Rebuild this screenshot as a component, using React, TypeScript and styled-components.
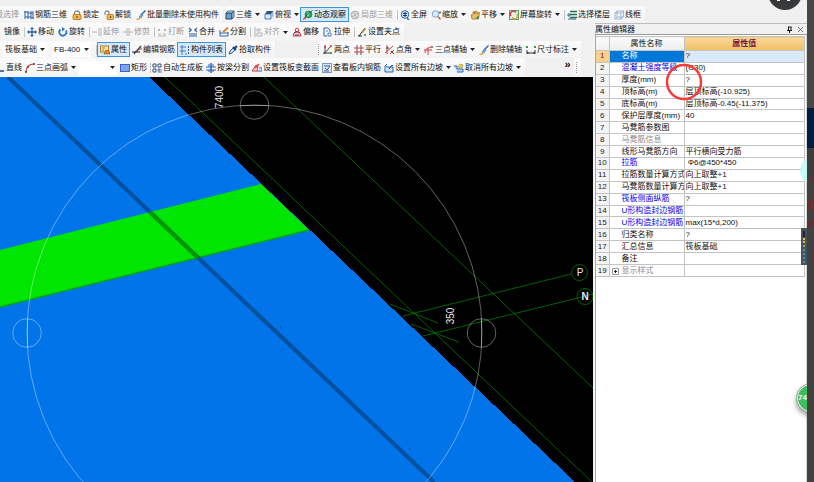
import React from "react";
import styled, { createGlobalStyle, css } from "styled-components";

const GlobalStyle = createGlobalStyle`
  * { box-sizing: border-box; }
  body {
    margin: 0;
    background: #f0f0f0;
    font-family: "Liberation Sans", "Noto Sans CJK SC", sans-serif;
    font-size: 8px;
    color: #111;
    overflow: hidden;
  }
  button, select { font: inherit; color: inherit; }
`;

/* ---------- icons ---------- */

const blue = "#2f62a8";
const red = "#d83a3a";
const gold = "#e0a030";
const dim = "#b4b4b4";

const cube = (
  <>
    <path d="M1 3h6v6H1z" fill="#6f9fcd" stroke="#1f4468" />
    <path d="M1 3l2-2h6L7 3zM7 3l2-2v6L7 9z" fill="#c7dff5" stroke="#1f4468" strokeWidth=".8" />
  </>
);
const brush = (
  <>
    <path d="M9.5.5L5 5" stroke="#3c78b8" strokeWidth="1.6" />
    <path d="M5.500 4L3 7l2 1 2-3z" fill="#7fb2e6" stroke={blue} strokeWidth=".6" />
    <path d="M.5 9.500c1.500 0 3-.5 3.500-2" stroke={gold} strokeWidth="1.400" />
  </>
);
const slope = (
  <>
    <path d="M1 9V3l2-2M1 9h8V4H3L1 2" stroke="#2a65b8" fill="#cfe3fa" />
    <path d="M5 6l3-4 1 1" stroke="#1c4e96" />
  </>
);

const icons: Record<string, React.ReactNode> = {
  rebar3d: <path d="M1 1v8M4 1v8M7 1v8M9 1v8M0 2h4M4 3h5M1 7h6M7 8h3" stroke={blue} />,
  lock: (
    <>
      <path d="M2.500 5V3a2.500 2 0 015 0v2" stroke="#8c8c8c" strokeWidth="1.300" />
      <rect x="1" y="4.500" width="8" height="5" rx="1" fill="#f2b64c" stroke="#a86f18" strokeWidth=".8" />
      <path d="M5 6v2" stroke="#6b430c" />
    </>
  ),
  unlock: (
    <>
      <path d="M1 5V3a2 2 0 014 0v1" stroke="#8c8c8c" strokeWidth="1.300" />
      <rect x="3" y="4.500" width="6.500" height="5" rx="1" fill="#f2b64c" stroke="#a86f18" strokeWidth=".8" />
      <path d="M6.500 6v2" stroke="#6b430c" />
    </>
  ),
  brush,
  cube,
  topview: (
    <>
      <path d="M1 4h6v5H1z" fill="#d9e8f7" stroke={blue} strokeWidth=".8" />
      <path d="M1 4l2-3h6.500L7 4z" fill="#2d567f" />
      <path d="M7 4l2.500-3v5L7 9z" fill="#8fb8df" />
    </>
  ),
  orbit: (
    <>
      <circle cx="5.500" cy="4.500" r="3.800" fill="#1f9a4a" />
      <path d="M4 2l3 1-1 3-2 1z" fill="#7fe08a" />
      <path d="M.5 9.500C2 6 6 3 9.500.5" stroke="#244f8e" />
      <circle cx="2" cy="8" r="1.200" fill="#e34d3c" />
    </>
  ),
  local3d: (
    <>
      <circle cx="5" cy="5" r="4" fill="#dedede" stroke={dim} />
      <path d="M2 7l6-4M3 2l4 6" stroke={dim} />
    </>
  ),
  full: (
    <>
      <circle cx="5" cy="4.500" r="3.800" fill="#d7e6f8" stroke={blue} />
      <path d="M3 3.500h4M3 5.500h4M5 2v5" stroke="#1a3f78" />
      <path d="M7 8l2 2" stroke={blue} strokeWidth="1.500" />
    </>
  ),
  zoom: (
    <>
      <circle cx="4.500" cy="4" r="3.300" fill="#d7ebff" stroke="#7fa3cb" />
      <path d="M7 6.500l2.500 3" stroke="#b9773b" strokeWidth="1.600" />
      <path d="M9 1v3M7.500 2.500h3" stroke="#555" strokeWidth=".7" />
    </>
  ),
  pan: (
    <>
      <path d="M2 9L1 5l2-.5V2l1.500-.5V4l1-3L7 1.500V4l1.500-2 1 .5L8.500 9z" fill="#e9bb62" stroke="#94671c" strokeWidth=".7" />
      <path d="M6 7l3-1v2.500L7 9z" fill="#4a8a54" />
    </>
  ),
  spin: (
    <>
      <rect x=".5" y=".5" width="9" height="9" fill="#dff2e4" stroke="#48a26a" />
      <path d="M2 6a3 3 0 015-3.500" stroke={red} strokeWidth="1.500" />
      <path d="M8 4a3 3 0 01-5 3.500" stroke="#e69a2a" strokeWidth="1.500" />
    </>
  ),
  floor: (
    <>
      <path d="M3 1.500h7M3 4.500h7M3 7.500h7" stroke="#1f6f4c" strokeWidth="1.500" />
      <path d="M0 5h4M2 3v4M1 9h8" stroke={blue} />
    </>
  ),
  wire: (
    <path d="M1 3h6v6H1zM1 3l2-2h6.500L7 3M9.500 1v6L7 9M3 1v6h6M3 7L1 9" stroke="#87a8cf" strokeWidth=".8" />
  ),
  move: (
    <>
      <path d="M5 1v8M1 5h8" stroke="#2b5f9e" strokeWidth="1.300" />
      <path d="M5 0l2 2H3zM5 10l2-2H3zM0 5l2-2v4zM10 5L8 3v4z" fill="#2b5f9e" />
    </>
  ),
  rotate: (
    <>
      <path d="M8 3.500A3.500 3.500 0 112.500 2.500" stroke="#2e74c8" strokeWidth="1.800" />
      <path d="M4 0v4.500L7 2z" fill="#2e74c8" />
    </>
  ),
  extend: <path d="M0 5h5M7 1v8M9 1v8" stroke={dim} />,
  trim: <path d="M0 5h4M6 5h4M4 1v8M6 1v8" stroke={dim} />,
  brk: <path d="M1 2l2 2M3 2L1 4M7 2l2 2M9 2L7 4M1 7h3M6 7h3M1 9h8" stroke={dim} />,
  merge: <path d="M1 1l2 2-2 2M9 1L7 3l2 2M3 3h1M6 3h1M1 7h8M1 9h8" stroke={blue} strokeWidth="1.200" />,
  split: (
    <>
      <path d="M1 3v6h8V5M1 6h8" stroke={blue} />
      <path d="M4 5l5-4.500" stroke="#e07a2a" strokeWidth="1.800" />
    </>
  ),
  align: <path d="M2 0v10M4 2h3v2H4zM4 6h5v3H4z" stroke={dim} />,
  offset: (
    <>
      <path d="M1 9a4 4 0 018 0z" fill="#f7d4d4" stroke={red} />
      <path d="M2 6a3.500 3.500 0 016 0M3 8h4" stroke="#23498a" />
      <circle cx="5" cy="3" r="1.800" stroke={red} />
    </>
  ),
  stretch: (
    <>
      <path d="M1 1h4l2 2v2M1 1v8h3" stroke={blue} />
      <path d="M5 6h3v3H5zM3 4h2" stroke="#4b86cf" />
    </>
  ),
  grip: (
    <>
      <path d="M2 9l6-8M1 9h4" stroke="#222" />
      <path d="M5 5l3-4 1 1-3 4z" fill="#c8963a" />
      <path d="M7 8h2" stroke="#318a38" strokeWidth="1.500" />
    </>
  ),
  props: (
    <>
      <rect x=".5" y="1" width="8" height="6" fill="#fbe6a8" stroke="#a88030" />
      <path d="M2 3h3M2 5h2" stroke="#a88030" />
      <path d="M4 9l2-4 3 1 1 3z" fill="#e88a2a" stroke="#8e4c10" strokeWidth=".6" />
    </>
  ),
  edit: (
    <>
      <path d="M0 7h8M2 9l2-3" stroke="#222" strokeWidth="1.200" />
      <path d="M4 7l5-6" stroke="#45484d" strokeWidth="1.600" />
      <path d="M7 4h3" stroke="#b0442a" />
    </>
  ),
  list: (
    <>
      <path d="M1 1h2v2H1zM1 5h2v2H1z" stroke={blue} strokeWidth=".8" />
      <path d="M4 2h2M4 6h2M1 9h2M5 9h2" stroke="#4d7cae" />
      <path d="M8.500 1v8" stroke={blue} strokeDasharray="2 1" />
    </>
  ),
  pick: (
    <>
      <path d="M1 9l1-3 3-3 2 2-3 3z" fill="#c4ddf6" stroke={blue} />
      <path d="M5 2l3 3M7 3l2-2" stroke="#17467f" strokeWidth="2" />
    </>
  ),
  two: (
    <>
      <path d="M2 0v9M0 8h9M8 1L1 9" stroke="#444" />
      <path d="M1 2h2M7 1h2" stroke={red} strokeWidth="1.500" />
      <path d="M7 8h2" stroke="#249a40" strokeWidth="1.500" />
    </>
  ),
  parallel: (
    <>
      <path d="M3 0v10M7 0v10" stroke="#555" />
      <path d="M0 3h10M0 7h10" stroke={red} />
    </>
  ),
  angle: (
    <>
      <path d="M2 0v9M0 8l8-7M5 9l4-4" stroke={red} />
      <path d="M1 3h3M6 6l3 3" stroke="#333" />
    </>
  ),
  axis3: (
    <>
      <path d="M1 8c0-4 3-6 8-6M4 10V3M0 5h8" stroke={red} />
      <path d="M7 2h2" stroke="#777" strokeWidth="1.500" />
    </>
  ),
  dim: (
    <>
      <path d="M1 5v4M9 5v4M1 8h8M2 7v2M8 7v2" stroke="#333" />
      <path d="M0 2h2M8 2h2" stroke="#2e9d45" strokeWidth="2" />
    </>
  ),
  line: <path d="M0 2l4 6M5 8h4" stroke="#24467c" strokeWidth="1.500" />,
  arc: (
    <>
      <path d="M1 9c0-5 3-8 8-8" stroke={red} strokeWidth="1.200" />
      <path d="M0 9h2M2 4h2M8 1h2" stroke="#444" strokeWidth="1.500" />
    </>
  ),
  rect: <rect x=".5" y="1.500" width="9" height="7" fill="#7ba4ec" stroke="#3a64bd" />,
  auto: (
    <>
      <path d="M1 1h3v3H1zM6 1h3v3H6zM1 6h3v3H1z" stroke="#33507c" />
      <path d="M5 7h5M6 9h4M7 5v4" stroke="#6a6fa8" />
    </>
  ),
  beam: (
    <>
      <path d="M0 4h10M0 7h10M3 1v3M7 1v3M3 7v2M7 7v2" stroke="#2b66b8" />
      <path d="M5 0v10" stroke="#2b66b8" strokeWidth="1.500" />
    </>
  ),
  section: (
    <>
      <path d="M0 8l4-6 2 1-1 5z" fill="#f7cfcf" stroke={red} />
      <path d="M5 8h5V5H7" stroke={blue} />
      <path d="M3 5l4-4" stroke={red} strokeWidth="1.500" />
    </>
  ),
  view: (
    <>
      <rect x=".5" y=".5" width="9" height="9" fill="#dbe6f5" stroke="#7d98c0" />
      <path d="M2 3h6M3 5l2 2 3-4M2 8h5" stroke="#3c5f94" />
    </>
  ),
  slope,
  unslope: (
    <>
      <path d="M0 3h3v3h6v3H3" stroke="#2a65b8" fill="#b9d6f8" />
      <path d="M4 4l2-3 3 1-1 3z" fill="#efcd62" stroke="#a58224" strokeWidth=".6" />
    </>
  ),
};

const IconSvg = styled.svg`
  width: 10px;
  height: 10px;
  flex: none;
  fill: none;
`;
const Icon = ({ name }: { name: string }) => (
  <IconSvg viewBox="0 0 10 10" aria-hidden="true">{icons[name]}</IconSvg>
);

const ArrowSvg = styled.svg`
  width: 5px;
  height: 3px;
  flex: none;
  margin-left: 2px;
  pointer-events: none;
`;
const Arrow = () => (
  <ArrowSvg viewBox="0 0 5 3" aria-hidden="true"><path d="M0 0h5L2.500 3z" fill="#222" /></ArrowSvg>
);

/* ---------- toolbars ---------- */

const Page = styled.div`
  position: relative;
  display: flex;
  height: 100vh;
  overflow: hidden;
`;
const Workspace = styled.main`
  position: relative;
  flex: 1;
  min-width: 0;
  display: flex;
  flex-direction: column;
  overflow: hidden;
`;
const Body = styled.div`
  flex: 1;
  min-height: 0;
  display: flex;
`;
const Left = styled.div`
  flex: 1;
  min-width: 0;
  display: flex;
  flex-direction: column;
`;
const Bar = styled.div<{ $h: number; $top?: number; $end?: number }>`
  flex: none;
  display: flex;
  gap: 2px;
  height: ${(p) => p.$h}px;
  padding-top: ${(p) => p.$top ?? 0}px;
  padding-right: ${(p) => p.$end ?? 0}px;
  overflow: hidden;
`;
const Group = styled.div<{ $gap?: number; $pad?: number }>`
  flex: none;
  display: flex;
  align-items: center;
  gap: ${(p) => p.$gap ?? 5}px;
  padding: 0 4px 0 ${(p) => p.$pad ?? 0}px;
  background: linear-gradient(#fbfbfb, #f3f3f3);
`;
const Spacer = styled.div`
  flex: 1;
`;
const ToolButton = styled.button<{ $active?: boolean; $clip?: number }>`
  flex: none;
  display: flex;
  align-items: center;
  gap: 1px;
  height: 15px;
  padding: 0;
  border: 0;
  background: none;
  white-space: nowrap;
  line-height: 12px;
  &:disabled { color: #999; }
  ${(p) => p.$active && css`
    padding: 0 2px;
    margin: 0 -3px;
    border: 1px solid #3c96dc;
    background: #d5e8f8;
  `}
  ${(p) => p.$clip && css`
    width: ${p.$clip}px;
    justify-content: flex-end;
    overflow: hidden;
  `}
`;
const Separator = styled.span`
  flex: none;
  width: 1px;
  height: 10px;
  margin-right: -2px;
  background: #c4c4c4;
`;
const Grip = styled.span`
  flex: none;
  width: 1px;
  height: 11px;
  border-left: 1px dotted #999;
`;
const MoreButton = styled.button`
  align-self: flex-start;
  width: 9px;
  padding: 0;
  border: 0;
  background: none;
  font-size: 11px;
  line-height: 12px;
  font-weight: bold;
`;

type ToolProps = {
  icon?: string;
  label: string;
  menu?: boolean;
  active?: boolean;
  off?: boolean;
  clip?: number;
  sep?: boolean;
};
const Tool = ({ icon, label, menu, active, off, clip, sep }: ToolProps) => (
  <>
    {sep && <Separator />}
    <ToolButton type="button" disabled={off} $active={active} $clip={clip}>
      {icon && <Icon name={icon} />}
      <span>{label}</span>
      {menu && <Arrow />}
    </ToolButton>
  </>
);

const ComboBox = styled.label<{ $w: number }>`
  flex: none;
  display: flex;
  align-items: center;
  width: ${(p) => p.$w}px;
  height: 14px;
  padding-right: 2px;
  background: #fff;
`;
const ComboSelect = styled.select`
  flex: 1;
  min-width: 0;
  height: 14px;
  padding: 0 0 0 2px;
  border: 0;
  background: none;
  appearance: none;
  line-height: 12px;
`;
const Combo = ({ name, value, w }: { name: string; value: string; w: number }) => (
  <ComboBox $w={w}>
    <ComboSelect aria-label={name} defaultValue={value}>
      <option>{value}</option>
    </ComboSelect>
    <Arrow />
  </ComboBox>
);

/* ---------- drawing area ---------- */

const Drawing = styled.svg`
  flex: 1;
  min-height: 0;
  width: 100%;
  display: block;
  background: #000;
  font-size: 10px;
`;

const Scene = () => (
  <Drawing viewBox="0 77 593 405" preserveAspectRatio="xMinYMin slice" role="img" aria-label="三维视图">
    <path d="M0 77H149L575 482H0z" fill="#0074e8" shapeRendering="crispEdges" />
    <path d="M0 250L261 184 309 230 0 307z" fill="#00e600" />
    <path d="M0 307L309 230" stroke="#00a01c" strokeWidth="1.500" />
    <path d="M8 77L434 482" stroke="#00509e" strokeWidth="4" />
    <path d="M150 212L198 258" stroke="#009a00" strokeWidth="4" />
    <g stroke="#007a00" fill="none" strokeWidth=".8">
      <path d="M165 77L592 482M264 77L593 388" />
      <path d="M403 316L571 274M423 336L578 298l15-4" />
      <path d="M390 304L438 323M411 324L459 342" />
      <circle cx="579.500" cy="272.500" r="8" />
      <circle cx="585" cy="296.500" r="8" />
    </g>
    <g stroke="#fff" strokeOpacity=".42" fill="none" strokeWidth=".9">
      <circle cx="254.500" cy="332.500" r="227.500" />
      <circle cx="254.500" cy="105" r="14.300" />
      <circle cx="481.500" cy="333" r="14.300" />
      <circle cx="27" cy="333" r="14.300" />
      <path d="M241 105.500h27M481.500 319v28M27.500 319v28" />
    </g>
    <path d="M280 327h1M409 449h1" stroke="#00305c" />
    <g fill="#e8e8e8" textAnchor="middle">
      <text transform="translate(223 97) rotate(-90)">7400</text>
      <text transform="translate(454 316) rotate(-90)">350</text>
      <text x="580" y="276">P</text>
      <text x="585" y="300" fontWeight="bold">N</text>
    </g>
  </Drawing>
);

/* ---------- property editor ---------- */

const Panel = styled.aside`
  position: relative;
  flex: none;
  width: 214px;
  display: flex;
  flex-direction: column;
  border-left: 2px solid #f4f4f4;
`;
const PanelTitle = styled.header`
  flex: none;
  display: flex;
  align-items: center;
  gap: 4px;
  height: 12px;
  padding: 1px 3px 0 0;
  border-top: 1px solid #bdbdbd;
  border-bottom: 1px solid #999;
`;
const TitleText = styled.h2`
  flex: 1;
  margin: 0;
  font-size: 8px;
  line-height: 10px;
  font-weight: normal;
`;
const TitleButton = styled.button`
  display: flex;
  padding: 0;
  border: 0;
  background: none;
`;
const TitleIcon = styled.svg`
  width: 7px;
  height: 7px;
  fill: none;
`;
const PanelBody = styled.div`
  flex: 1;
  min-height: 0;
  padding: 1px 1px 0 0;
  border-left: 1px solid #a6a6a6;
  border-right: 1px solid #d8d8d8;
  background: #fff;
`;
const Grid = styled.table`
  width: 100%;
  height: 241px;
  table-layout: fixed;
  border-collapse: collapse;
  line-height: 10px;
  border-right: 1px solid #c0c0c0;
`;
const HeadCell = styled.th<{ $w?: number; $hot?: boolean }>`
  width: ${(p) => (p.$w ? p.$w + "px" : "auto")};
  height: 14px;
  padding: 0;
  border: 1px solid #c4c4c4;
  border-left: 0;
  font-weight: normal;
  background: ${(p) => (p.$hot ? "linear-gradient(#f9d99b, #f0bf63)" : "linear-gradient(#fbfbfb, #ededed)")};
  ${(p) => p.$hot && css`color: #7c1444; font-weight: bold;`}
`;
const IndexCell = styled.th<{ $selected: boolean }>`
  padding: 0;
  border-right: 1px solid #c4c4c4;
  border-bottom: 1px solid #c4c4c4;
  font-weight: normal;
  background: ${(p) => (p.$selected ? "#fbd08a" : "#f4f4f4")};
  color: ${(p) => (p.$selected ? "#7c1444" : "#222")};
`;
const nameColors = { plain: "#111", link: "#0000f0", muted: "#8c8c8c" };
const NameCell = styled.td<{ $tone: keyof typeof nameColors; $selected: boolean }>`
  padding: 0 0 0 12px;
  border-right: 1px solid #c4c4c4;
  border-bottom: 1px solid #c4c4c4;
  white-space: nowrap;
  overflow: hidden;
  color: ${(p) => (p.$selected ? "#fff" : nameColors[p.$tone])};
  background: ${(p) => (p.$selected ? "#0078d7" : "#fff")};
`;
const ValueCell = styled.td<{ $selected: boolean }>`
  padding: 0 0 0 1px;
  border-bottom: 1px solid #c4c4c4;
  white-space: pre;
  overflow: hidden;
  background: ${(p) => (p.$selected ? "#d8eaf9" : "#fff")};
`;
const Expander = styled.button`
  float: left;
  display: flex;
  width: 7px;
  height: 7px;
  margin: 2px 0 0 -10px;
  padding: 0;
  border: 0;
  background: #fff;
`;
const Marker = styled.svg`
  position: absolute;
  left: 69px;
  top: 40px;
  width: 40px;
  height: 40px;
  fill: none;
  pointer-events: none;
`;

type Row = { name: string; value?: string; tone?: keyof typeof nameColors; expand?: boolean };
const rows: Row[] = [
  { name: "名称", value: "?" },
  { name: "混凝土强度等级", value: "(C30)", tone: "link" },
  { name: "厚度(mm)", value: "?" },
  { name: "顶标高(m)", value: "层顶标高(-10.925)" },
  { name: "底标高(m)", value: "层顶标高-0.45(-11.375)" },
  { name: "保护层厚度(mm)", value: "40" },
  { name: "马凳筋参数图" },
  { name: "马凳筋信息", tone: "muted" },
  { name: "线形马凳筋方向", value: "平行横向受力筋" },
  { name: "拉筋", value: " Φ6@450*450", tone: "link" },
  { name: "拉筋数量计算方式", value: "向上取整+1" },
  { name: "马凳筋数量计算方", value: "向上取整+1" },
  { name: "筏板侧面纵筋", value: "?", tone: "link" },
  { name: "U形构造封边钢筋", tone: "link" },
  { name: "U形构造封边钢筋", value: "max(15*d,200)", tone: "link" },
  { name: "归类名称", value: "?" },
  { name: "汇总信息", value: "筏板基础" },
  { name: "备注" },
  { name: "显示样式", tone: "muted", expand: true },
];

const PropertyEditor = () => (
  <Panel>
    <PanelTitle>
      <TitleText>属性编辑器</TitleText>
      <TitleButton type="button" aria-label="固定">
        <TitleIcon viewBox="0 0 7 7"><path d="M2.500 1v3M5 1v3M2 1h3.500M1 4.500h5M3.500 4v3" stroke="#111" /></TitleIcon>
      </TitleButton>
      <TitleButton type="button" aria-label="关闭">
        <TitleIcon viewBox="0 0 7 7"><path d="M1 1l5 5M6 1L1 6" stroke="#555" strokeWidth=".8" /></TitleIcon>
      </TitleButton>
    </PanelTitle>
    <PanelBody>
      <Grid>
        <thead>
          <tr>
            <HeadCell $w={13} aria-label="序号" />
            <HeadCell $w={75}>属性名称</HeadCell>
            <HeadCell $hot>属性值</HeadCell>
          </tr>
        </thead>
        <tbody>
          {rows.map((r, i) => (
            <tr key={i}>
              <IndexCell scope="row" $selected={i === 0}>{i + 1}</IndexCell>
              <NameCell $tone={r.tone ?? "plain"} $selected={i === 0}>
                {r.expand && (
                  <Expander type="button" aria-label="展开">
                    <TitleIcon viewBox="0 0 7 7">
                      <path d="M.5.5h6v6h-6z" stroke="#9a9a9a" />
                      <path d="M2 3.500h3M3.500 2v3" stroke="#222" />
                    </TitleIcon>
                  </Expander>
                )}
                {r.name}
              </NameCell>
              <ValueCell $selected={i === 0}>{r.value}</ValueCell>
            </tr>
          ))}
        </tbody>
      </Grid>
    </PanelBody>
    <Marker viewBox="0 0 40 40" aria-hidden="true">
      <circle cx="20" cy="19" r="17" stroke="#f73a3a" strokeWidth="2.500" />
    </Marker>
  </Panel>
);

/* ---------- floating widgets and right edge ---------- */

const CallBubble = styled.svg`
  position: absolute;
  top: 0;
  right: 5px;
  width: 34px;
  height: 10px;
`;
const Halo = styled.span`
  position: absolute;
  top: 158px;
  right: -19px;
  width: 26px;
  height: 26px;
  border-radius: 50%;
  background: #c6fbf7;
`;
const Meter = styled.svg`
  position: absolute;
  top: 228px;
  right: 0;
  width: 6px;
  height: 37px;
`;
const ScoreBall = styled.div`
  position: absolute;
  top: 383px;
  right: -19px;
  width: 30px;
  height: 30px;
  padding-left: 1px;
  border: 1px solid #a8b0a8;
  border-radius: 50%;
  background: #40bd5c;
  box-shadow: inset 0 0 0 1px #f2f2f2, 0 3px 5px rgba(0, 0, 0, 0.4);
  color: #fff;
  font-weight: bold;
  line-height: 28px;
`;
const Edge = styled.div`
  flex: none;
  width: 7px;
  display: flex;
  flex-direction: column;
  overflow: hidden;
  background: #414240;
`;
const EdgeBlock = styled.div<{ $h: number; $bg: string }>`
  flex: none;
  height: ${(p) => p.$h}px;
  background: ${(p) => p.$bg};
`;
const EdgeText = styled.div`
  flex: none;
  font-size: 12px;
  line-height: 16px;
  white-space: nowrap;
  color: #8c2020;
`;
const EdgeMark = styled.svg`
  flex: none;
  width: 7px;
  height: 20px;
  fill: none;
`;

export default function App() {
  return (
    <Page>
      <GlobalStyle />
      <Workspace>
        <Bar $h={23} $top={6}>
          <Group>
            <Tool label="量选择" off clip={19} />
            <Tool icon="rebar3d" label="钢筋三维" />
            <Tool icon="lock" label="锁定" />
            <Tool icon="unlock" label="解锁" />
            <Tool icon="brush" label="批量删除未使用构件" />
          </Group>
          <Group $gap={4}>
            <Tool icon="cube" label="三维" menu />
            <Tool icon="topview" label="俯视" menu />
            <Tool icon="orbit" label="动态观察" active />
            <Tool icon="local3d" label="局部三维" off />
            <Tool icon="full" label="全屏" sep />
            <Tool icon="zoom" label="缩放" menu />
            <Tool icon="pan" label="平移" menu />
            <Tool icon="spin" label="屏幕旋转" menu />
            <Tool icon="floor" label="选择楼层" sep />
            <Tool icon="wire" label="线框" />
          </Group>
        </Bar>
        <Body>
          <Left>
            <Bar $h={18}>
              <Group $pad={4} $gap={4}>
                <Tool label="镜像" />
                <Tool icon="move" label="移动" sep />
                <Tool icon="rotate" label="旋转" />
                <Tool icon="extend" label="延伸" sep off />
                <Tool icon="trim" label="修剪" off />
                <Tool icon="brk" label="打断" sep off />
                <Tool icon="merge" label="合并" />
                <Tool icon="split" label="分割" />
                <Tool icon="align" label="对齐" sep off menu />
                <Tool icon="offset" label="偏移" />
                <Tool icon="stretch" label="拉伸" />
                <Tool icon="grip" label="设置夹点" sep />
              </Group>
            </Bar>
            <Bar $h={17} $end={12}>
              <Group $pad={3}>
                <Combo name="构件类型" value="筏板基础" w={44} />
                <Combo name="构件" value="FB-400" w={39} />
                <Tool icon="props" label="属性" active sep />
                <Tool icon="edit" label="编辑钢筋" />
                <Tool icon="list" label="构件列表" active />
                <Tool icon="pick" label="拾取构件" />
              </Group>
              <Spacer />
              <Group $gap={4}>
                <Grip />
                <Tool icon="two" label="两点" />
                <Tool icon="parallel" label="平行" />
                <Tool icon="angle" label="点角" menu />
                <Tool icon="axis3" label="三点辅轴" menu />
                <Tool icon="brush" label="删除辅轴" />
                <Tool icon="dim" label="尺寸标注" menu />
              </Group>
            </Bar>
            <Bar $h={19} $end={12}>
              <Group $gap={3}>
                <Tool icon="line" label="直线" clip={22} />
                <Tool icon="arc" label="三点画弧" menu />
                <Combo name="画法" value="" w={38} />
                <Tool icon="rect" label="矩形" />
                <Tool icon="auto" label="自动生成板" sep />
                <Tool icon="beam" label="按梁分割" />
                <Tool icon="section" label="设置筏板变截面" />
                <Tool icon="view" label="查看板内钢筋" />
                <Tool icon="slope" label="设置所有边坡" menu />
                <Tool icon="unslope" label="取消所有边坡" menu />
              </Group>
              <Spacer />
              <MoreButton type="button" aria-label="更多">»</MoreButton>
              <Group $pad={2}>
                <Grip />
              </Group>
            </Bar>
            <Scene />
          </Left>
          <PropertyEditor />
        </Body>
        <CallBubble viewBox="0 0 34 10" aria-hidden="true">
          <circle cx="17" cy="-7" r="17" fill="#38393b" />
          <path d="M9 0h3v1H9zM19 0h3v1h-3z" fill="#fff" />
        </CallBubble>
        <Halo />
        <Meter viewBox="0 0 6 37" aria-hidden="true">
          <path d="M0 0h6v37H0z" fill="#4b505c" />
          <path d="M2 3h2v6H2z" fill="#20242c" />
          <path d="M2 11h2M2 14h2" stroke="#e0c832" strokeWidth="2" />
          <path d="M2 18h2" stroke="#86b84a" strokeWidth="2" />
          <path d="M2 22h2M2 26h2M2 30h2M2 34h2" stroke="#2c9fc6" strokeWidth="2" />
        </Meter>
        <ScoreBall>74</ScoreBall>
      </Workspace>
      <Edge>
        <EdgeBlock $h={108} $bg="#474846" />
        <EdgeBlock $h={40} $bg="#001f40" />
        <EdgeBlock $h={30} $bg="#3d3d3c" />
        <EdgeMark viewBox="0 0 7 20" aria-hidden="true">
          <path d="M1 2h2l3-1M1 9h2M1 17l2-2" stroke="#7c2020" />
        </EdgeMark>
        <EdgeText>我</EdgeText>
        <EdgeMark viewBox="0 0 7 20" aria-hidden="true">
          <path d="M0 13l7-7" stroke="#7c2020" strokeWidth="2" />
        </EdgeMark>
      </Edge>
    </Page>
  );
}
